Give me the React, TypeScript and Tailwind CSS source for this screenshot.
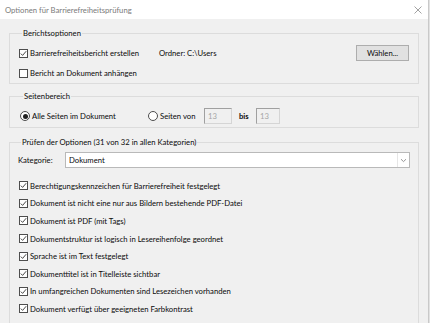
import { ReactNode } from "react";

const CHECKS = [
  "Berechtigungskennzeichen für Barrierefreiheit festgelegt",
  "Dokument ist nicht eine nur aus Bildern bestehende PDF-Datei",
  "Dokument ist PDF (mit Tags)",
  "Dokumentstruktur ist logisch in Lesereihenfolge geordnet",
  "Sprache ist im Text festgelegt",
  "Dokumenttitel ist in Titelleiste sichtbar",
  "In umfangreichen Dokumenten sind Lesezeichen vorhanden",
  "Dokument verfügt über geeigneten Farbkontrast",
];

const CheckBox = ({ checked }: { checked?: boolean }) => (
  <span className="w-[9px] h-[9px] border border-[#4d4d4d] bg-white flex items-center justify-center shrink-0">
    {checked && (
      <svg width="7" height="7" viewBox="0 0 7 7" fill="none">
        <path d="M0.8 3.6 L2.6 5.4 L6.2 1.2" stroke="#333" strokeWidth="0.9" />
      </svg>
    )}
  </span>
);

const Radio = ({ checked }: { checked?: boolean }) => (
  <span className="w-[10px] h-[10px] rounded-full border border-[#4d4d4d] bg-white flex items-center justify-center shrink-0">
    {checked && <span className="w-[5px] h-[5px] rounded-full bg-[#222]" />}
  </span>
);

const Group = ({ title, className, children }: { title: string; className: string; children: ReactNode }) => (
  <fieldset className={`border border-[#dcdcdc] ${className}`}>
    <legend className="ml-[3px] px-[1px] leading-[12px]">{title}</legend>
    {children}
  </fieldset>
);

const SmallInput = ({ w }: { w: string }) => (
  <span className={`${w} h-[16px] border border-[#d5d5d5] border-t-[#a0a0a0] border-l-[#a0a0a0] bg-[#f0f0f0] text-[#a5a5a5] pl-[3px] leading-[14px]`}>
    13
  </span>
);

export default function App() {
  return (
    <div className="w-[430px] h-[323px] overflow-hidden flex bg-[#f0f0f0] text-[7.7px] leading-[12px] text-[#0a0a0a] font-['Lato',sans-serif]">
      <div className="w-[428px]">
        <div className="h-[19px] bg-white flex items-center justify-between pl-[5px] pr-[6px] text-[#7a7a7a]">
          <span>Optionen für Barrierefreiheitsprüfung</span>
          <svg width="8" height="8" viewBox="0 0 8 8" stroke="#8a8a8a" strokeWidth="0.8">
            <path d="M0.5 0.5 L7.5 7.5 M7.5 0.5 L0.5 7.5" />
          </svg>
        </div>

        <div className="flex flex-col px-[9px] pt-[8px]">
          <Group title="Berichtsoptionen" className="h-[57px] px-[9px] pt-[6px]">
            <div className="flex items-center h-[16px]">
              <CheckBox checked />
              <span className="ml-[2px] w-[129px]">Barrierefreiheitsbericht erstellen</span>
              <span>Ordner: C:\Users</span>
              <span className="ml-auto w-[53px] h-[16px] bg-[#e1e1e1] border border-[#adadad] flex items-center justify-center">
                Wählen...
              </span>
            </div>
            <div className="flex items-center h-[16px] mt-[4px]">
              <CheckBox />
              <span className="ml-[2px]">Bericht an Dokument anhängen</span>
            </div>
          </Group>

          <Group title="Seitenbereich" className="mt-[6px] h-[38px] px-[10px] pt-[6px]">
            <div className="flex items-center h-[16px]">
              <Radio checked />
              <span className="ml-[2px] w-[116px]">Alle Seiten im Dokument</span>
              <Radio />
              <span className="ml-[2px] w-[44px]">Seiten von</span>
              <SmallInput w="w-[28px]" />
              <span className="ml-[7px] w-[17px] font-bold">bis</span>
              <SmallInput w="w-[24px]" />
            </div>
          </Group>

          <Group title="Prüfen der Optionen (31 von 32 in allen Kategorien)" className="mt-[8px] h-[200px] px-[8px] pt-[4px]">
            <div className="flex items-center h-[16px]">
              <span className="w-[47px]">Kategorie:</span>
              <div className="flex-1 h-[16px] bg-white border border-[#b9b9b9] flex items-center">
                <span className="pl-[3px] flex-1">Dokument</span>
                <span className="w-[12px] h-full flex items-center justify-center border-l border-[#e6e6e6]">
                  <svg width="7" height="5" viewBox="0 0 7 5" fill="none" stroke="#8a8a8a" strokeWidth="0.9">
                    <path d="M1 1.2 L3.5 3.6 L6 1.2" />
                  </svg>
                </span>
              </div>
            </div>
            <div className="flex flex-col mt-[9px] pl-[1px]">
              {CHECKS.map((c) => (
                <div key={c} className="flex items-center h-[17.6px]">
                  <CheckBox checked />
                  <span className="ml-[2px]">{c}</span>
                </div>
              ))}
            </div>
          </Group>
        </div>
      </div>
      <div className="w-[2px] border-l border-[#c9c9c9] bg-[#e2e2e2]" />
    </div>
  );
}
